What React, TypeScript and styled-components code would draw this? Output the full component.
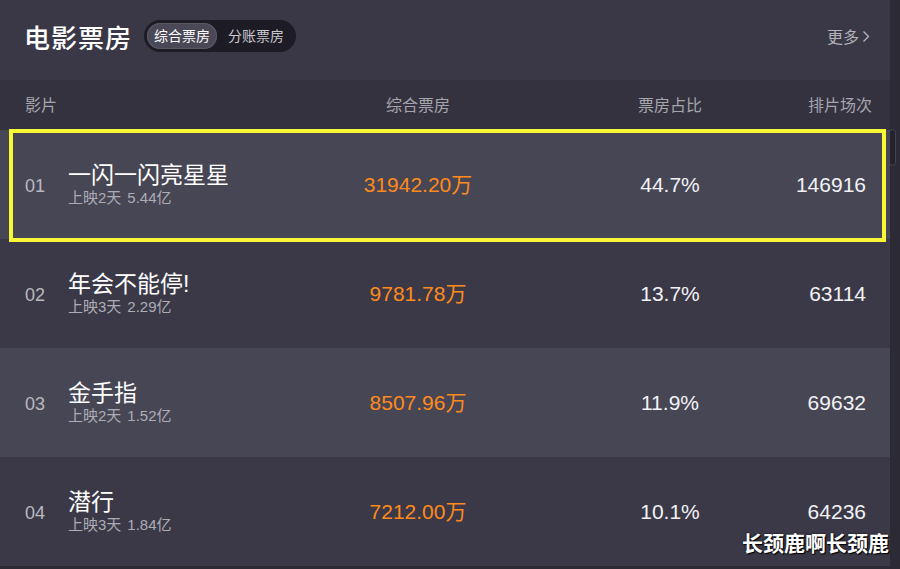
import React from "react";
import styled, { createGlobalStyle } from "styled-components";

const Global = createGlobalStyle`
  html, body { margin: 0; padding: 0; background: #2c2b35; }
  body { font-family: "Liberation Sans", "Noto Sans CJK SC", sans-serif; }
  * { box-sizing: border-box; }
`;

const Page = styled.div`
  position: relative;
  width: 900px;
  height: 569px;
  display: flex;
  overflow: hidden;
  background: #2c2b35;
`;

const Main = styled.div`
  width: 890px;
  display: flex;
  flex-direction: column;
`;

const Track = styled.div`
  width: 10px;
  background: #2c2b35;
  display: flex;
  flex-direction: column;
`;

const Thumb = styled.div`
  margin-top: 129px;
  margin-left: -1px;
  width: 7px;
  height: 37px;
  border-radius: 4px;
  background: #24232b;
  border: 1px solid #454452;
`;

const TopBar = styled.div`
  height: 80px;
  background: #3a3846;
  display: flex;
  align-items: center;
  padding: 0 20px 8px 24px;
`;

const Title = styled.h1`
  margin: 0;
  font-size: 26px;
  font-weight: 500;
  color: #ffffff;
  letter-spacing: 1px;
`;

const Toggle = styled.div`
  margin-left: 12px;
  display: flex;
  align-items: center;
  gap: 4px;
  height: 32px;
  padding: 0 5px 0 3px;
  border-radius: 16px;
  background: #1d1b23;
`;

const ToggleItem = styled.span<{ $active?: boolean }>`
  height: 26px;
  line-height: 26px;
  padding: 0 7px;
  border-radius: 13px;
  font-size: 14px;
  color: ${(p) => (p.$active ? "#ffffff" : "#c9c8cf")};
  background: ${(p) => (p.$active ? "#4a4857" : "transparent")};
  box-shadow: ${(p) => (p.$active ? "inset 0 0 0 1px #5a5867" : "none")};
`;

const More = styled.a`
  margin-left: auto;
  display: flex;
  align-items: center;
  gap: 3px;
  font-size: 16px;
  color: #b4b3bb;
  text-decoration: none;
`;

const Grid = styled.div`
  display: grid;
  grid-template-columns: 43px 230px 240px 264px minmax(0, 1fr);
  align-items: center;
  padding: 0 24px 0 25px;
`;

const HeadRow = styled(Grid)`
  height: 50px;
  background: #34323f;
  padding-right: 18px;
  padding-bottom: 2px;
  font-size: 16px;
  color: #a6a5ae;
`;

const HeadCell = styled.div<{ $align?: "start" | "center" | "end"; $span?: number }>`
  justify-self: ${(p) => p.$align ?? "start"};
  grid-column: span ${(p) => p.$span ?? 1};
  white-space: nowrap;
`;

const Row = styled(Grid)<{ $alt?: boolean }>`
  position: relative;
  height: 109px;
  background: ${(p) => (p.$alt ? "#474655" : "#3b3947")};
`;

const Highlight = styled.div`
  position: absolute;
  left: 9px;
  right: 4px;
  top: -1px;
  bottom: -3px;
  border: 4px solid #f8f836;
  pointer-events: none;
  z-index: 2;
`;

const Rank = styled.div`
  font-size: 18px;
  line-height: 22px;
  color: #bab9c0;
  padding-top: 2px;
`;

const FilmInfo = styled.div`
  display: flex;
  flex-direction: column;
`;

const FilmName = styled.div`
  font-size: 23px;
  line-height: 27px;
  color: #ffffff;
  white-space: nowrap;
`;

const FilmMeta = styled.div`
  font-size: 15px;
  line-height: 18px;
  color: #adacb4;
  white-space: nowrap;
  display: flex;
  gap: 6px;
`;

const Cell = styled.div<{ $align: "center" | "end"; $color?: string }>`
  justify-self: ${(p) => p.$align};
  font-size: 21px;
  line-height: 24px;
  color: ${(p) => p.$color ?? "#f2f2f5"};
  white-space: nowrap;
`;

const Watermark = styled.div`
  position: absolute;
  right: 11px;
  bottom: 14px;
  font-family: "Noto Sans CJK SC", sans-serif;
  font-size: 21px;
  font-weight: 700;
  line-height: 25px;
  color: #ffffff;
  text-shadow: 0 0 2px #000, 1px 1px 1px #000;
  z-index: 3;
`;

const films = [
  { rank: "01", name: "一闪一闪亮星星", days: "上映2天", total: "5.44亿", box: "31942.20万", pct: "44.7%", shows: "146916" },
  { rank: "02", name: "年会不能停!", days: "上映3天", total: "2.29亿", box: "9781.78万", pct: "13.7%", shows: "63114" },
  { rank: "03", name: "金手指", days: "上映2天", total: "1.52亿", box: "8507.96万", pct: "11.9%", shows: "69632" },
  { rank: "04", name: "潜行", days: "上映3天", total: "1.84亿", box: "7212.00万", pct: "10.1%", shows: "64236" },
];

export default function App() {
  return (
    <>
      <Global />
      <Page>
        <Main>
          <TopBar>
            <Title>电影票房</Title>
            <Toggle>
              <ToggleItem $active>综合票房</ToggleItem>
              <ToggleItem>分账票房</ToggleItem>
            </Toggle>
            <More href="#">
              更多
              <svg width="8" height="13" viewBox="0 0 8 13" fill="none">
                <path d="M1.5 1.5 L6.5 6.5 L1.5 11.5" stroke="#b4b3bb" strokeWidth="1.4" />
              </svg>
            </More>
          </TopBar>
          <HeadRow>
            <HeadCell $span={2}>影片</HeadCell>
            <HeadCell $align="center">综合票房</HeadCell>
            <HeadCell $align="center">票房占比</HeadCell>
            <HeadCell $align="end">排片场次</HeadCell>
          </HeadRow>
          {films.map((f, i) => (
            <Row key={f.rank} $alt={i % 2 === 0}>
              {i === 0 && <Highlight />}
              <Rank>{f.rank}</Rank>
              <FilmInfo>
                <FilmName>{f.name}</FilmName>
                <FilmMeta>
                  <span>{f.days}</span>
                  <span>{f.total}</span>
                </FilmMeta>
              </FilmInfo>
              <Cell $align="center" $color="#ff8a1c">{f.box}</Cell>
              <Cell $align="center">{f.pct}</Cell>
              <Cell $align="end">{f.shows}</Cell>
            </Row>
          ))}
        </Main>
        <Track>
          <Thumb />
        </Track>
        <Watermark>长颈鹿啊长颈鹿</Watermark>
      </Page>
    </>
  );
}
